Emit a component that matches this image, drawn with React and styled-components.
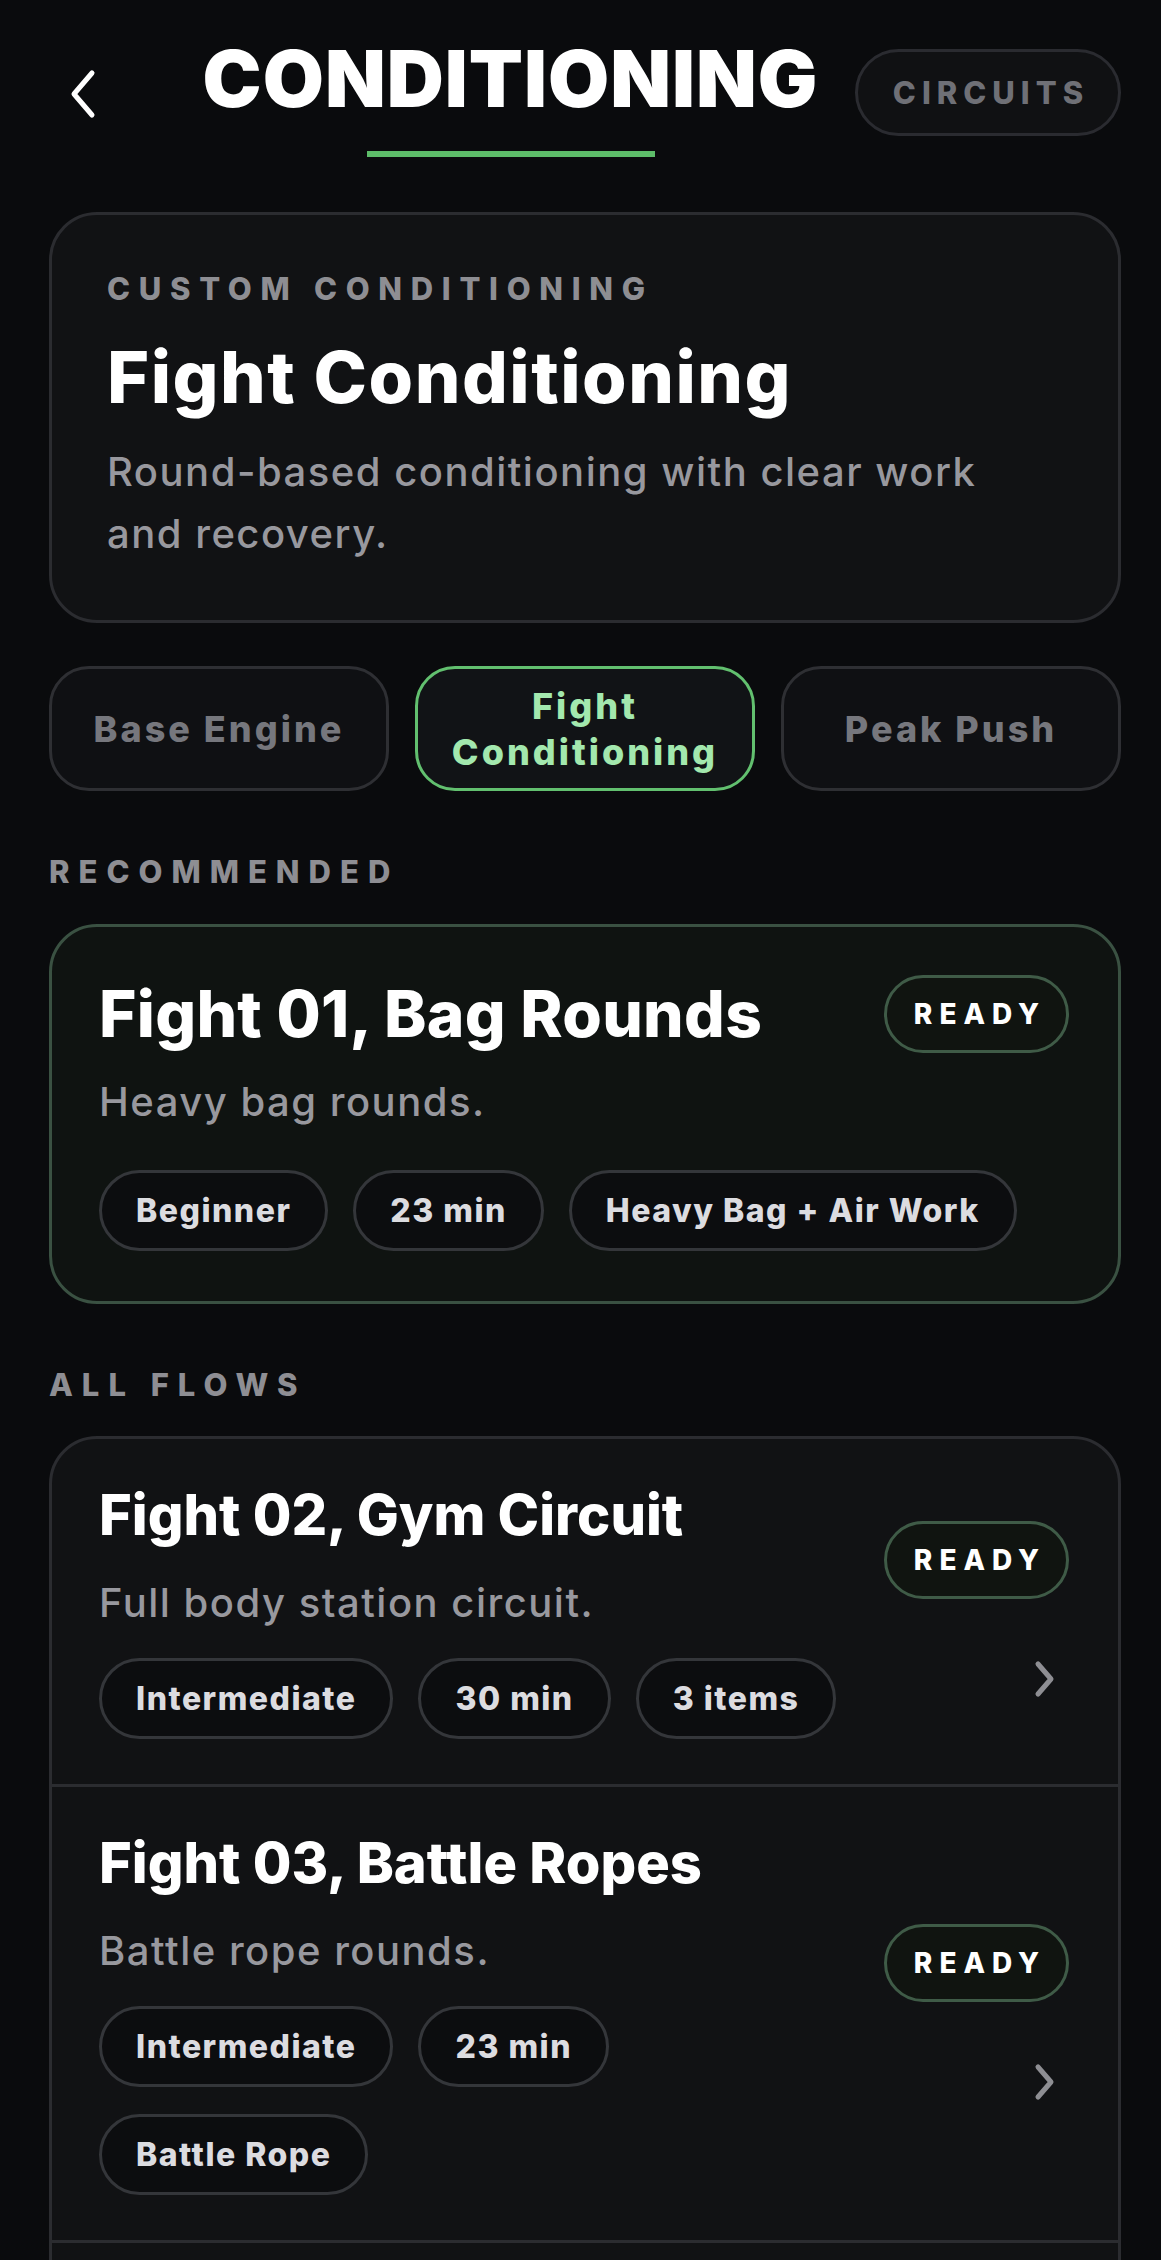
import React from "react";
import styled, { createGlobalStyle } from "styled-components";

const GlobalStyle = createGlobalStyle`
  * {
    box-sizing: border-box;
  }
  body {
    margin: 0;
    background: #0a0b0d;
    font-family: Inter, "Liberation Sans", sans-serif;
    -webkit-font-smoothing: antialiased;
  }
`;

const programs = ["Base Engine", "Fight Conditioning", "Peak Push"];

const recommended = {
  title: "Fight 01, Bag Rounds",
  desc: "Heavy bag rounds.",
  tags: ["Beginner", "23 min", "Heavy Bag + Air Work"],
};

const flows = [
  {
    title: "Fight 02, Gym Circuit",
    desc: "Full body station circuit.",
    tags: ["Intermediate", "30 min", "3 items"],
  },
  {
    title: "Fight 03, Battle Ropes",
    desc: "Battle rope rounds.",
    tags: ["Intermediate", "23 min", "Battle Rope"],
  },
];

function Conditioning() {
  return (
    <Page>
      <Header>
        <BackButton aria-label="Back">
          <svg width="30" height="50" viewBox="0 0 30 50" fill="none">
            <path
              d="M24 4 L6 25 L24 46"
              stroke="#ffffff"
              strokeWidth="5"
              strokeLinecap="round"
              strokeLinejoin="round"
            />
          </svg>
        </BackButton>
        <TitleBlock>
          <Title>CONDITIONING</Title>
          <Underline />
        </TitleBlock>
        <CircuitsButton>CIRCUITS</CircuitsButton>
      </Header>

      <HeroCard>
        <Eyebrow>Custom Conditioning</Eyebrow>
        <HeroTitle>Fight Conditioning</HeroTitle>
        <HeroDesc>Round-based conditioning with clear work and recovery.</HeroDesc>
      </HeroCard>

      <Tabs>
        {programs.map((p) => (
          <Tab key={p} $active={p === "Fight Conditioning"}>
            {p}
          </Tab>
        ))}
      </Tabs>

      <SectionLabel>Recommended</SectionLabel>
      <RecCard>
        <CardHead>
          <RecTitle>{recommended.title}</RecTitle>
          <Badge>READY</Badge>
        </CardHead>
        <Desc $gap={21}>{recommended.desc}</Desc>
        <Chips>
          {recommended.tags.map((t) => (
            <Chip key={t}>{t}</Chip>
          ))}
        </Chips>
      </RecCard>

      <SectionLabel>All Flows</SectionLabel>
      <ListCard>
        {flows.map((f) => (
          <Row key={f.title}>
            <RowMain>
              <RowTitle>{f.title}</RowTitle>
              <Desc $gap={26}>{f.desc}</Desc>
              <Chips $gap={27}>
                {f.tags.map((t) => (
                  <Chip key={t}>{t}</Chip>
                ))}
              </Chips>
            </RowMain>
            <RowSide>
              <Badge>READY</Badge>
              <svg width="40" height="40" viewBox="0 0 40 40" fill="none">
                <path
                  d="M9 5 L22 20 L9 35"
                  stroke="#8e8e93"
                  strokeWidth="5"
                  strokeLinecap="round"
                  strokeLinejoin="round"
                />
              </svg>
            </RowSide>
          </Row>
        ))}
      </ListCard>
    </Page>
  );
}

export default function App() {
  return (
    <>
      <GlobalStyle />
      <Conditioning />
    </>
  );
}

const Page = styled.div`
  height: 2260px;
  overflow: hidden;
  padding: 35px 40px 0 49px;
  background: #0a0b0d;
`;

const Header = styled.header`
  display: flex;
  align-items: flex-start;
`;

const BackButton = styled.button`
  width: 117px;
  margin-top: 34px;
  padding: 0 0 0 19px;
  background: none;
  border: 0;
  display: flex;
  cursor: pointer;
`;

const TitleBlock = styled.div`
  flex: 1;
  display: flex;
  flex-direction: column;
  align-items: center;
`;

const Title = styled.h1`
  margin: 0;
  font-size: 79px;
  font-weight: 900;
  line-height: 1.1;
  letter-spacing: 1px;
  color: #ffffff;
`;

const Underline = styled.div`
  width: 288px;
  height: 6px;
  margin-top: 29px;
  background: #5dbd69;
`;

const CircuitsButton = styled.button`
  margin-top: 14px;
  width: 266px;
  height: 87px;
  padding: 0 0 0 6px;
  border: 3px solid #2a2b30;
  border-radius: 44px;
  background: #101113;
  color: #6f7076;
  font-family: inherit;
  font-size: 31px;
  font-weight: 800;
  letter-spacing: 6px;
`;

const HeroCard = styled.section`
  margin-top: 55px;
  padding: 55px;
  border: 3px solid #2b2c30;
  border-radius: 48px;
  background: #111214;
`;

const Eyebrow = styled.div`
  font-size: 31px;
  font-weight: 800;
  line-height: 1.2;
  letter-spacing: 8.7px;
  text-transform: uppercase;
  color: #8e8e93;
`;

const HeroTitle = styled.h2`
  margin: 27px 0 0;
  font-size: 72px;
  font-weight: 800;
  line-height: 1.2;
  letter-spacing: 1.5px;
  color: #ffffff;
`;

const HeroDesc = styled.p`
  margin: 21px 0 0;
  font-size: 40px;
  font-weight: 500;
  line-height: 62px;
  letter-spacing: 1.5px;
  color: #98989e;
`;

const Tabs = styled.div`
  margin-top: 43px;
  display: grid;
  grid-template-columns: repeat(3, 1fr);
  gap: 26px;
`;

const Tab = styled.button`
  height: 125px;
  padding: 0 20px;
  border: 3px solid ${(p) => (p.$active ? "#62c06f" : "#2e2f33")};
  border-radius: 40px;
  background: ${(p) => (p.$active ? "#111316" : "#0f1013")};
  color: ${(p) => (p.$active ? "#a3e8ae" : "#76777d")};
  font-family: inherit;
  font-size: 36px;
  font-weight: 800;
  line-height: 46px;
  letter-spacing: 3px;
  text-align: center;
`;

const SectionLabel = styled.div`
  margin: 62px 0 33px;
  font-size: 31px;
  font-weight: 800;
  line-height: 1.2;
  letter-spacing: 9px;
  text-transform: uppercase;
  color: #8e8e93;
`;

const RecCard = styled.section`
  padding: 48px 49px 50px 47px;
  border: 3px solid #3a5142;
  border-radius: 48px;
  background: #0f1311;
`;

const CardHead = styled.div`
  display: flex;
  align-items: center;
  justify-content: space-between;
  gap: 24px;
`;

const RecTitle = styled.h3`
  margin: 0;
  font-size: 64px;
  font-weight: 800;
  line-height: 1.15;
  letter-spacing: 0.3px;
  color: #ffffff;
`;

const Badge = styled.span`
  display: inline-flex;
  align-items: center;
  height: 78px;
  padding: 0 20px 0 27px;
  border: 3px solid #3f5b47;
  border-radius: 40px;
  background: #101410;
  color: #ffffff;
  font-size: 28px;
  font-weight: 800;
  letter-spacing: 7px;
`;

const Desc = styled.p`
  margin: ${(p) => p.$gap}px 0 0;
  font-size: 40px;
  font-weight: 500;
  line-height: 56px;
  letter-spacing: 1.5px;
  color: #98989e;
`;

const Chips = styled.div`
  display: flex;
  flex-wrap: wrap;
  gap: 27px 25px;
  margin-top: ${(p) => p.$gap || 40}px;
`;

const Chip = styled.span`
  display: inline-flex;
  align-items: center;
  height: 81px;
  padding: 0 34px;
  border: 3px solid #34363a;
  border-radius: 41px;
  background: #0c0d0f;
  color: #dcdce0;
  font-size: 32px;
  font-weight: 800;
  letter-spacing: 1.5px;
`;

const ListCard = styled.section`
  padding-bottom: 80px;
  border: 3px solid #2b2c30;
  border-radius: 48px;
  background: #111214;
`;

const Row = styled.div`
  display: flex;
  gap: 24px;
  padding: 43px 49px 45px 47px;
  border-bottom: 3px solid #2b2c30;
`;

const RowMain = styled.div`
  flex: 1;
  min-width: 0;
`;

const RowTitle = styled.h3`
  margin: 0;
  font-size: 56px;
  font-weight: 800;
  line-height: 1.2;
  letter-spacing: 0;
  color: #ffffff;
`;

const RowSide = styled.div`
  display: flex;
  flex-direction: column;
  align-items: flex-end;
  justify-content: center;
  gap: 60px;
`;
